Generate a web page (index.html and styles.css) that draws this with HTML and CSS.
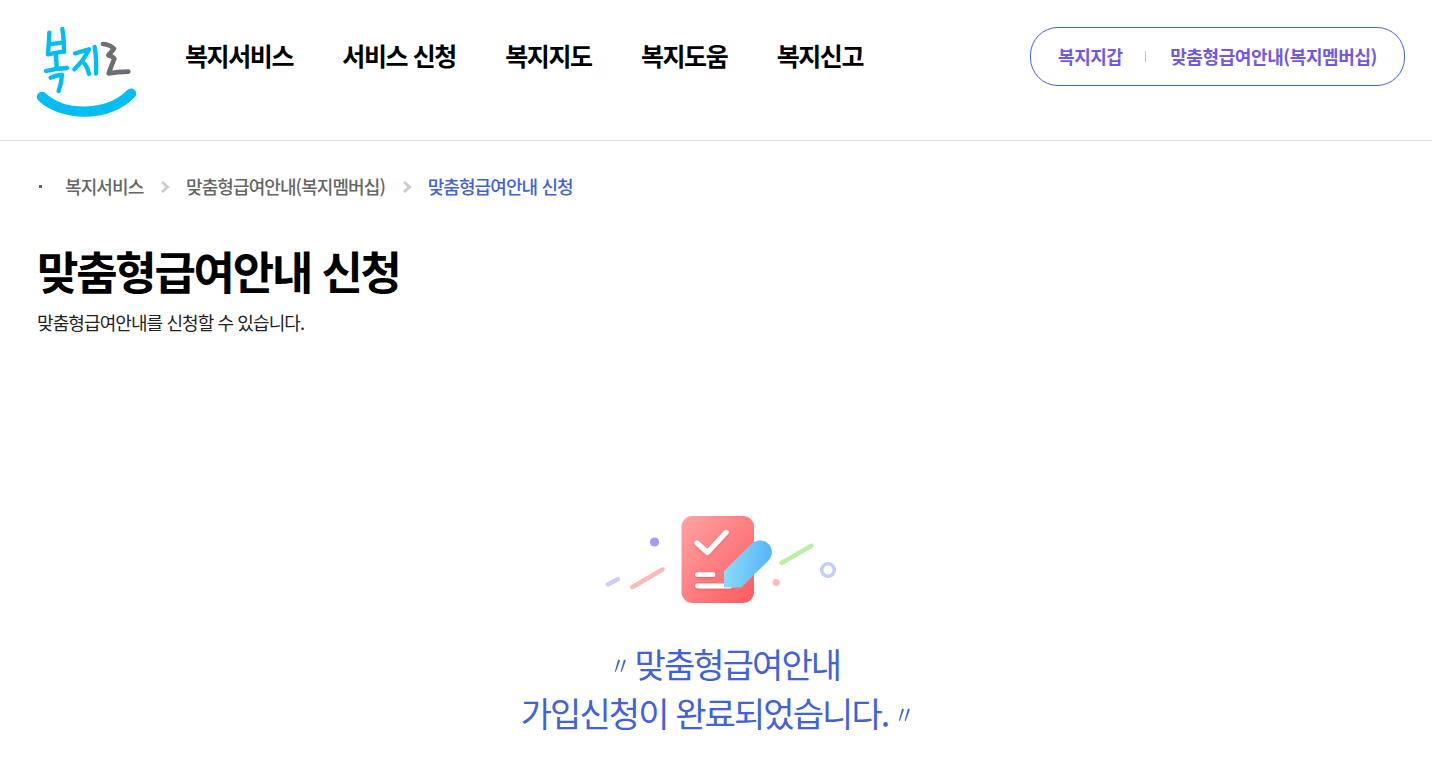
FILE: index.html
```html
<!DOCTYPE html>
<html lang="ko">
<head>
<meta charset="utf-8">
<title>맞춤형급여안내 신청</title>
<link rel="stylesheet" href="styles.css">
</head>
<body>
<header class="header">
  <a class="logo" aria-label="복지로">
    <svg width="99" height="90" viewBox="51 36 297 270" fill="none" stroke-linecap="round" stroke-linejoin="round">
      <path d="M66 246C132 306 264 306 333 236" stroke="#00bdf2" stroke-width="31" />
      <g stroke="#00bdf2" stroke-width="13">
        <path d="M88 53Q87 80 84 118L131 109M127 42Q132 72 132 111M89 88L130 82M108 116L110 158M78 168Q108 160 141 159M92 188Q114 179 126 180Q124 207 116 228" />
        <path d="M165 115L207 103Q191 136 163 163M189 141Q202 154 207 177M224 96Q230 130 228 176" />
      </g>
      <path d="M249 87Q270 89 282 101L265 121Q277 123 283 131Q276 148 266 175Q294 171 325 170" stroke="#6d6e72" stroke-width="14" />
    </svg>
  </a>
  <nav class="nav">
    <a>복지서비스</a><a>서비스 신청</a><a>복지지도</a><a>복지도움</a><a>복지신고</a>
  </nav>
  <div class="quick">
    <a>복지지갑</a><span class="divider"></span><a>맞춤형급여안내(복지멤버십)</a>
  </div>
</header>
<main class="main">
  <div class="breadcrumb">
    <span class="dot"></span>
    <a>복지서비스</a>
    <svg class="chevron" width="10" height="14" viewBox="0 0 10 14"><path d="M2 2L7.500 7L2 12" /></svg>
    <a>맞춤형급여안내(복지멤버십)</a>
    <svg class="chevron" width="10" height="14" viewBox="0 0 10 14"><path d="M2 2L7.500 7L2 12" /></svg>
    <a class="current">맞춤형급여안내 신청</a>
  </div>
  <h1 class="title">맞춤형급여안내 신청</h1>
  <p class="description">맞춤형급여안내를 신청할 수 있습니다.</p>
  <section class="complete">
    <svg class="illustration" width="234" height="90" viewBox="604 514 234 90" fill="none" stroke-linecap="round" stroke-linejoin="round">
      <defs>
        <linearGradient id="paper" x1="0" y1="0" x2="1" y2="1"><stop offset="0" stop-color="#ffa3a3" /><stop offset="1" stop-color="#ff5a5f" /></linearGradient>
        <linearGradient id="pen" x1="0" y1="0.500" x2="1" y2="0.600"><stop offset="0" stop-color="#8bdcf8" /><stop offset="1" stop-color="#55b2fa" /></linearGradient>
        <filter id="shadow" x="-20%" y="-30%" width="140%" height="180%"><feDropShadow dx="0" dy="1" stdDeviation="1" flood-color="#d93540" flood-opacity="0.500" /></filter>
      </defs>
      <path d="M608 584.500L618 579" stroke="#d2c9ff" stroke-width="4.500" />
      <path d="M632.500 587L662.500 569.500" stroke="#ffb9ba" stroke-width="4.500" />
      <circle cx="654.500" cy="542" r="4.600" fill="#a799ff" />
      <rect x="681.500" y="516" width="72.500" height="87" rx="11" fill="url(#paper)" />
      <g stroke="#fff" stroke-width="5.300" filter="url(#shadow)">
        <path d="M697 543L707.500 552.500L726 532.500" />
        <path d="M697.500 574.700H713M697.500 586H730" stroke-width="4.800" />
      </g>
      <path d="M724 571L751.500 544A11.700 11.700 0 0 1 768.500 560.500L741 587.500H724Z" fill="url(#pen)" />
      <path d="M781.500 563L811.500 545.800" stroke="#b9f0a4" stroke-width="4.500" />
      <circle cx="776.300" cy="582.500" r="3.600" fill="#ffb9ba" />
      <circle cx="828" cy="570" r="6.300" stroke="#c3cff8" stroke-width="3.600" />
    </svg>
    <p class="message"><span class="quote open">〃</span>맞춤형급여안내<br>가입신청이 완료되었습니다.<span class="quote close">〃</span></p>
  </section>
</main>
</body>
</html>
```
FILE: styles.css
```css
* { box-sizing: border-box; letter-spacing: -0.05em; }
body {
  margin: 0;
  background: #fff;
  color: #000;
  font-family: "Noto Sans CJK KR", sans-serif;
  height: 769px;
  overflow: hidden;
}
h1, p { margin: 0; }
.header {
  display: flex;
  align-items: flex-start;
  height: 141px;
  padding: 27px 27px 0 37px;
  border-bottom: 1px solid #ddd;
}
.logo { width: 99px; height: 90px; }
.logo svg { display: block; }
.nav {
  display: flex;
  gap: 49.3px;
  margin-left: 49px;
  padding-top: 10px;
  font-size: 25px;
  font-weight: 700;
  line-height: 37px;
  white-space: nowrap;
}
.nav a { letter-spacing: -1.4px; }
.quick {
  display: flex;
  align-items: center;
  justify-content: space-between;
  width: 375px;
  height: 59px;
  margin-left: auto;
  padding: 0 27px;
  border: 1px solid #4162dc;
  border-radius: 28px;
  color: #7258e8;
  font-size: 18px;
  font-weight: 700;
  white-space: nowrap;
}
.quick a { padding-bottom: 2px; letter-spacing: -0.022em; }
.divider { width: 1px; height: 11px; margin-right: 2px; background: #c5bdf0; }
.main { padding: 32px 37px 0; }
.breadcrumb {
  display: flex;
  align-items: center;
  height: 27px;
  color: #666;
  font-size: 18px;
  font-weight: 500;
  line-height: 27px;
}
.dot { width: 3px; height: 3px; margin: 0 23px 0 2px; background: #666; }
.chevron { margin: 0 16px 0 16.7px; fill: none; stroke: #ccc; stroke-width: 3; }
.current { color: #4162dc; }
.title {
  margin-top: 38px;
  font-size: 45px;
  font-weight: 700;
  line-height: 66px;
}
.description {
  margin-top: 5px;
  color: #222;
  font-size: 18px;
  font-weight: 400;
  line-height: 27px;
}
.complete {
  display: flex;
  flex-direction: column;
  align-items: center;
  padding-top: 178px;
}
.illustration { margin-left: 10px; }
.message {
  margin-top: 35px;
  color: #4162dc;
  font-size: 34px;
  font-weight: 400;
  letter-spacing: -1.9px;
  line-height: 49px;
  text-align: center;
  white-space: nowrap;
}
.quote {
  display: inline-block;
  font-size: 23px;
  line-height: 20px;
  vertical-align: 4px;
  transform: scale(0.88, 1.1);
}
.open { margin: 0 4px 0 17px; }
.close { margin: 0 -4px 0 5px; }
```
